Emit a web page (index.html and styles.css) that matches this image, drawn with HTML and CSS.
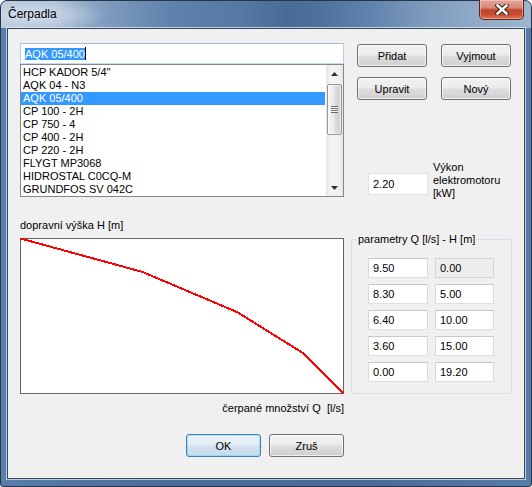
FILE: index.html
```html
<!DOCTYPE html>
<html lang="cs">
<head>
<meta charset="utf-8">
<title>Čerpadla</title>
<link rel="stylesheet" href="styles.css">
</head>
<body>
<div class="window">
  <div class="titlebar">
    <span class="title">Čerpadla</span>
    <span class="close">
      <svg width="14" height="11" viewBox="0 0 14 11">
        <path d="M2.5 1.5 L11.5 9.5 M11.5 1.5 L2.5 9.5" stroke="#3d2a26" stroke-width="4.6" stroke-linecap="square"/>
        <path d="M2.5 1.5 L11.5 9.5 M11.5 1.5 L2.5 9.5" stroke="#ffffff" stroke-width="2.4" stroke-linecap="square"/>
      </svg>
    </span>
  </div>
  <div class="client">
    <div class="row-top">
      <div class="col-left">
        <div class="edit combo"><span class="sel">AQK 05/400</span><span class="caret"></span></div>
        <div class="listbox">
          <ul class="items">
            <li>HCP KADOR 5/4"</li>
            <li>AQK 04 - N3</li>
            <li class="selected">AQK 05/400</li>
            <li>CP 100 - 2H</li>
            <li>CP 750 - 4</li>
            <li>CP 400 - 2H</li>
            <li>CP 220 - 2H</li>
            <li>FLYGT MP3068</li>
            <li>HIDROSTAL C0CQ-M</li>
            <li>GRUNDFOS SV 042C</li>
          </ul>
          <div class="vscroll">
            <div class="arrow"><svg width="7" height="4" viewBox="0 0 7 4"><path d="M0 4 L3.5 0 L7 4 Z" fill="#303030"/></svg></div>
            <div class="track">
              <div class="thumb"><span class="grip"></span></div>
            </div>
            <div class="arrow"><svg width="7" height="4" viewBox="0 0 7 4"><path d="M0 0 L3.5 4 L7 0 Z" fill="#303030"/></svg></div>
          </div>
        </div>
      </div>
      <div class="col-right">
        <div class="btn-grid">
          <button class="btn">Přidat</button>
          <button class="btn">Vyjmout</button>
          <button class="btn">Upravit</button>
          <button class="btn">Nový</button>
        </div>
        <div class="power">
          <div class="edit power-edit">2.20</div>
          <div class="power-label">Výkon<br>elektromotoru<br>[kW]</div>
        </div>
      </div>
    </div>
    <div class="row-mid">
      <div class="col-left">
        <div class="axis-y">dopravní výška H [m]</div>
        <svg class="chart" width="324" height="156" viewBox="0 0 324 156">
          <rect x="0.5" y="0.5" width="323" height="155" fill="#ffffff" stroke="#646464"/>
          <polyline points="0.5,0.5 122.4,33.9 217.6,74.3 282.2,114.6 323.5,155.5" fill="none" stroke="#ff0000" stroke-width="2" shape-rendering="crispEdges"/>
        </svg>
        <div class="axis-x">čerpané množství Q&nbsp; [l/s]</div>
      </div>
      <div class="group">
        <div class="group-title">parametry Q [l/s] - H [m]</div>
        <div class="pgrid">
          <div class="edit cell">9.50</div>
          <div class="edit cell disabled">0.00</div>
          <div class="edit cell">8.30</div>
          <div class="edit cell">5.00</div>
          <div class="edit cell">6.40</div>
          <div class="edit cell">10.00</div>
          <div class="edit cell">3.60</div>
          <div class="edit cell">15.00</div>
          <div class="edit cell">0.00</div>
          <div class="edit cell">19.20</div>
        </div>
      </div>
    </div>
    <div class="row-bottom">
      <button class="btn wide default">OK</button>
      <button class="btn wide">Zruš</button>
    </div>
  </div>
</div>
</body>
</html>
```

FILE: styles.css
```css
* { box-sizing: border-box; }

html, body {
  margin: 0;
  background: #ffffff;
}

body {
  font-family: "Liberation Sans", Arial, sans-serif;
  font-size: 11px;
  color: #000;
}

.window {
  width: 532px;
  height: 487px;
  border: 1px solid #26354a;
  border-radius: 7px 7px 3px 3px;
  background: linear-gradient(90deg, #5a7eab 0%, #4a6d9c 30%, #4a6c9a 70%, #587ca9 100%);
  padding: 0 6px 7px;
  display: flex;
  flex-direction: column;
}

.titlebar {
  height: 27px;
  margin: 0 -6px;
  border-radius: 6px 6px 0 0;
  display: flex;
  justify-content: space-between;
  align-items: flex-start;
  background:
    radial-gradient(ellipse 70px 18px at 34px 14px, rgba(225, 234, 244, 0.75), rgba(225, 234, 244, 0) 100%),
    linear-gradient(90deg, #b3c5da 0%, #a7bbd2 10%, #7f9cbf 20%, #5f81ab 32%, #5678a3 45%, #4a6b96 54%, #4f709b 60%, #6183ad 70%, #7e9bbd 80%, #90aac7 90%, #9fb5cf 100%);
}

.title {
  font-size: 12px;
  line-height: 15px;
  padding: 6px 0 0 7px;
  color: #000;
}

.close {
  width: 45px;
  height: 20px;
  margin: -1px 7px 0 0;
  border: 1px solid #5e2318;
  border-top: none;
  border-radius: 0 0 5px 5px;
  background: linear-gradient(180deg, #e4a799 0%, #d88a78 40%, #c2452c 52%, #c74a30 75%, #dc7656 100%);
  box-shadow: inset 0 0 0 1px rgba(255, 220, 210, 0.45);
  display: flex;
  align-items: center;
  justify-content: center;
}

.client {
  height: 451px;
  border: 1px solid #34475f;
  box-shadow: 0 0 0 1px rgba(235, 242, 250, 0.7);
  background: #f0f0f0;
  padding: 14px 0 0 12px;
  display: flex;
  flex-direction: column;
}

.row-top {
  display: flex;
  align-items: flex-start;
}

.col-left {
  width: 324px;
  display: flex;
  flex-direction: column;
}

.edit {
  background: #ffffff;
  border: 1px solid;
  border-color: #abadb3 #dbdfe6 #e3e9ef #e2e3ea;
  display: flex;
  align-items: center;
  padding-left: 4px;
  line-height: 13px;
  white-space: nowrap;
}

.combo {
  height: 21px;
  border-color: #a3bfd9 #b9d1e6 #c6daeb #b9d1e6;
}

.sel {
  background: #3399ff;
  color: #ffffff;
  line-height: 12px;
  height: 12px;
}

.caret {
  width: 1px;
  height: 13px;
  background: #000;
}

.listbox {
  height: 133px;
  border: 1px solid #828790;
  background: #ffffff;
  display: flex;
}

.items {
  flex: 1;
  list-style: none;
  margin: 0;
  padding: 1px 1px 0 0;
}

.items li {
  height: 13px;
  line-height: 13px;
  padding-left: 2px;
  white-space: nowrap;
}

.items li.selected {
  background: #3399ff;
  color: #ffffff;
}

.vscroll {
  width: 17px;
  display: flex;
  flex-direction: column;
  background: linear-gradient(90deg, #e6e6e6 0%, #f2f2f2 25%, #f2f2f2 75%, #e8e8e8 100%);
}

.arrow {
  height: 17px;
  display: flex;
  align-items: center;
  justify-content: center;
}

.track {
  flex: 1;
  padding-top: 2px;
}

.thumb {
  width: 15px;
  height: 51px;
  margin-left: 1px;
  border: 1px solid #969696;
  border-radius: 2px;
  background: linear-gradient(90deg, #f4f4f4 0%, #ebebeb 45%, #dadada 55%, #cfcfcf 100%);
  box-shadow: inset 0 0 0 1px rgba(255, 255, 255, 0.6);
  display: flex;
  align-items: center;
  justify-content: center;
}

.grip {
  width: 7px;
  height: 7px;
  background: repeating-linear-gradient(180deg, #6a6a6a 0px, #6a6a6a 1px, #f6f6f6 1px, #f6f6f6 2px);
}

.col-right {
  margin-left: 13px;
  padding-top: 1px;
  display: flex;
  flex-direction: column;
}

.btn-grid {
  display: grid;
  grid-template-columns: 70px 70px;
  grid-auto-rows: 23px;
  column-gap: 14px;
  row-gap: 10px;
}

.btn {
  font-family: inherit;
  font-size: 11px;
  font-weight: normal;
  color: #000;
  padding: 0;
  margin: 0;
  border: 1px solid #707070;
  border-radius: 3px;
  background: linear-gradient(180deg, #f2f2f2 0%, #ebebeb 48%, #dddddd 52%, #cfcfcf 100%);
  box-shadow: inset 0 0 0 1px rgba(252, 252, 252, 0.75);
}

.power {
  display: flex;
  align-items: flex-start;
  margin-top: 61px;
}

.power-edit {
  width: 60px;
  height: 22px;
  margin: 12px 0 0 11px;
  border-color: #e3e3e3;
}

.power-label {
  margin-left: 5px;
  line-height: 13px;
}

.row-mid {
  display: flex;
  align-items: flex-start;
  margin-top: 19px;
}

.axis-y {
  line-height: 13px;
  height: 13px;
}

.chart {
  display: block;
  margin-top: 6px;
}

.axis-x {
  text-align: right;
  line-height: 13px;
  margin-top: 8px;
  white-space: nowrap;
}

.group {
  position: relative;
  margin: 20px 0 0 7px;
  width: 161px;
  height: 155px;
  border: 1px solid #d5dfe5;
  border-radius: 3px;
  padding: 18px 0 0 16px;
}

.group-title {
  position: absolute;
  left: 4px;
  top: -7px;
  padding: 0 2px;
  line-height: 13px;
  background: #f0f0f0;
  white-space: nowrap;
}

.pgrid {
  display: grid;
  grid-template-columns: 60px 59px;
  grid-auto-rows: 20px;
  column-gap: 7px;
  row-gap: 6px;
}

.cell {
  border-color: #c8c8c8 #d9d9d9 #dedede #d9d9d9;
}

.cell.disabled {
  background: #eeeeee;
  border-color: #d4d4d4;
}

.row-bottom {
  width: 324px;
  display: flex;
  justify-content: flex-end;
  gap: 8px;
  margin-top: 19px;
}

.btn.wide {
  width: 75px;
  height: 23px;
}

.btn.default {
  border-color: #3c7fb1;
  background: linear-gradient(180deg, #edf4f9 0%, #e1ecf4 48%, #d2e2ee 52%, #c7dbe9 100%);
  box-shadow: inset 0 0 0 1px rgba(120, 210, 245, 0.55);
}
```
